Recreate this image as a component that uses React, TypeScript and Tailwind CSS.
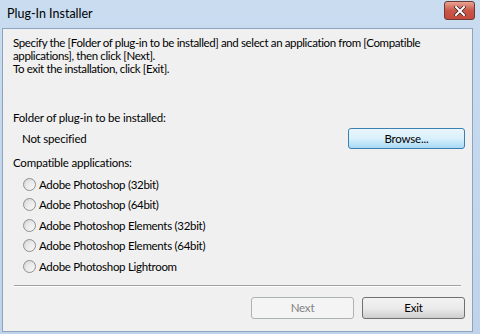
import React from "react"

const apps = [
  "Adobe Photoshop (32bit)",
  "Adobe Photoshop (64bit)",
  "Adobe Photoshop Elements (32bit)",
  "Adobe Photoshop Elements (64bit)",
  "Adobe Photoshop Lightroom",
]

function Radio() {
  return (
    <span className="w-[13px] h-[13px] rounded-full border border-[#8e8f8f] bg-gradient-to-br from-[#d5d5d5] to-[#fbfbfb] flex items-center justify-center shrink-0">
      <span className="w-[7px] h-[7px] rounded-full bg-gradient-to-br from-[#e2e2e2] to-[#f6f6f6]" />
    </span>
  )
}

export default function App() {
  return (
    <div
      className="w-[480px] h-[334px] flex flex-col bg-gradient-to-b from-[#c9dcf0] to-[#bfd4ea] text-[11.5px] tracking-[-0.2px] text-black overflow-hidden"
      style={{ fontFamily: 'Lato, "Segoe UI", sans-serif' }}
    >
      <div className="h-[28px] flex items-start justify-between pl-[7px] pr-[5px] shrink-0">
        <span className="mt-[6px] text-[12.5px] leading-[16px] tracking-normal">Plug-In Installer</span>
        <div className="mt-[1px] w-[31px] h-[19px] rounded-[3px] border border-[#6d3a35] bg-gradient-to-b from-[#e8a392] via-[#c9574a] to-[#c44a3b] flex items-center justify-center">
          <svg width="12" height="10" viewBox="0 0 12 10">
            <path d="M2 1 L10 9 M10 1 L2 9" stroke="#3b2020" strokeWidth="3.4" strokeLinecap="square" />
            <path d="M2 1 L10 9 M10 1 L2 9" stroke="#fff" strokeWidth="2" strokeLinecap="square" />
          </svg>
        </div>
      </div>
      <div className="flex-1 ml-[2px] mr-[7px] mb-[2px] bg-[#f0f0f0] border border-[#8ca4bf] flex flex-col px-[10px]">
        <p className="mt-[7px] leading-[13px] whitespace-nowrap tracking-[-0.37px]">
          Specify the [Folder of plug-in to be installed] and select an application from [Compatible
          <br />
          applications], then click [Next].
          <br />
          To exit the installation, click [Exit].
        </p>
        <p className="mt-[35px] leading-[15px]">Folder of plug-in to be installed:</p>
        <div className="mt-[3px] flex items-center justify-between">
          <span className="ml-[9px]">Not specified</span>
          <button className="w-[117px] h-[21px] rounded-[3px] border border-[#3c7fb1] bg-gradient-to-b from-[#eaf6fd] via-[#d9f0fc] to-[#a7d9f5] -mr-[3px]">
            Browse...
          </button>
        </div>
        <p className="mt-[6px] leading-[15px]">Compatible applications:</p>
        <div className="mt-[4px] flex flex-col ml-[10px] tracking-[-0.3px]">
          {apps.map((a) => (
            <div key={a} className="flex items-center gap-[3px] h-[20.5px]">
              <Radio />
              <span>{a}</span>
            </div>
          ))}
        </div>
        <div className="mt-[8px] h-[2px] border-t border-[#a0a0a0] border-b border-b-white mx-[1px]" />
        <div className="mt-[10px] flex justify-end gap-[8px] -mr-[3px]">
          <button className="w-[103px] h-[22px] rounded-[3px] border border-[#adb2b5] bg-[#f4f4f4] text-[#838383]">Next</button>
          <button className="w-[103px] h-[22px] rounded-[3px] border border-[#707070] bg-gradient-to-b from-[#f2f2f2] via-[#ebebeb] to-[#cfcfcf]">Exit</button>
        </div>
      </div>
    </div>
  )
}
